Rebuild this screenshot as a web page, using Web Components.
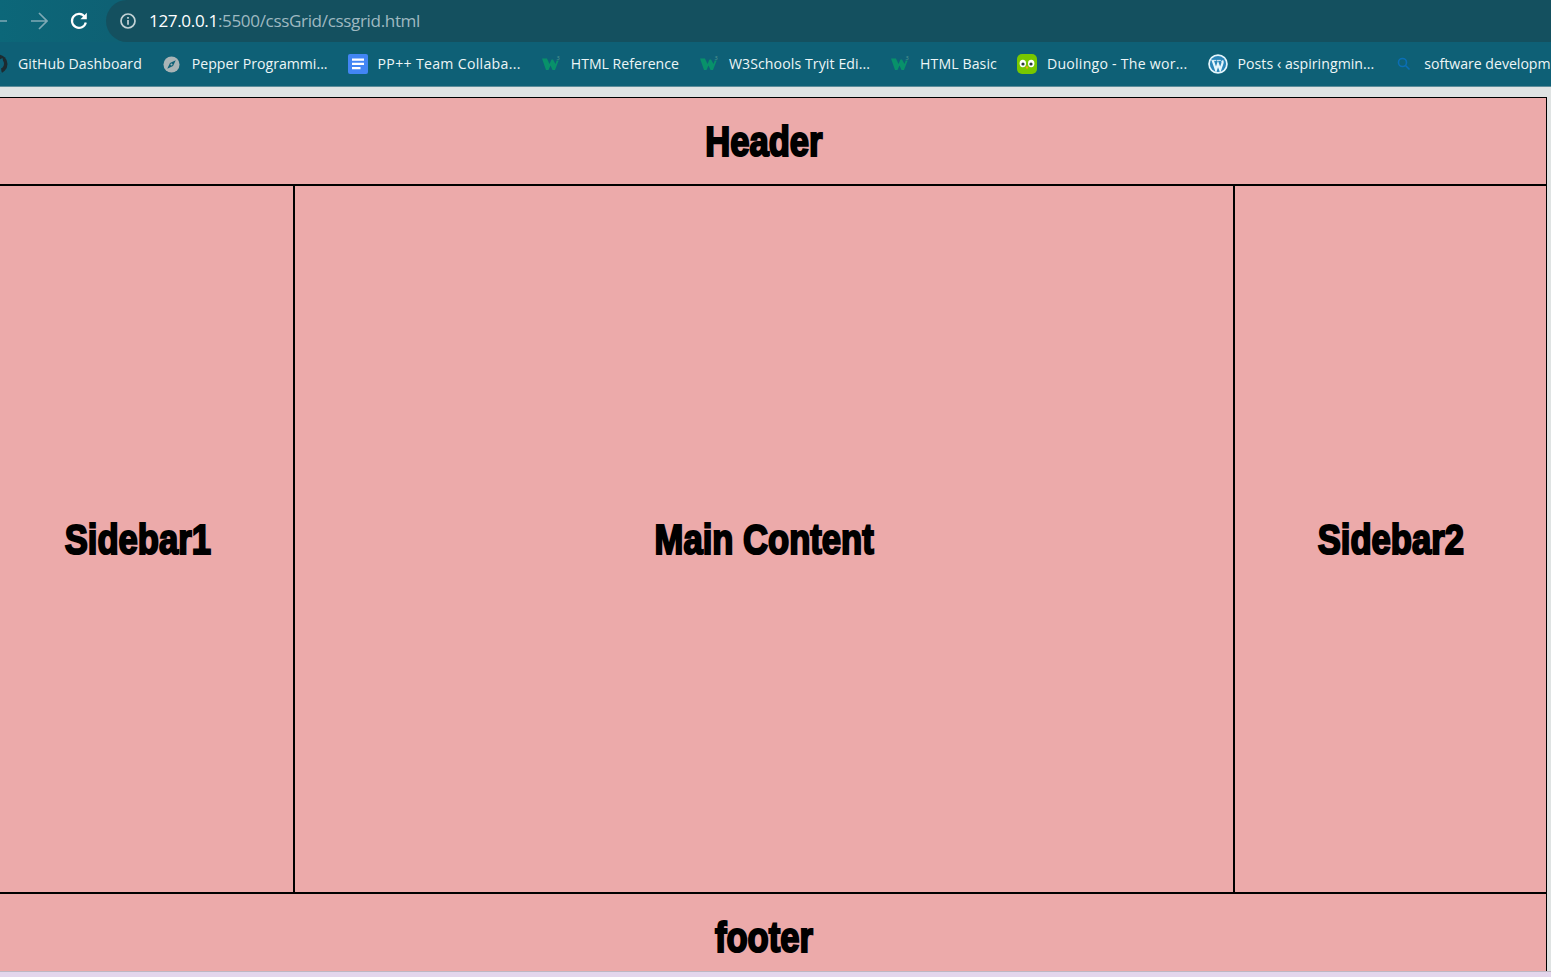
<!DOCTYPE html>
<html><head><meta charset="utf-8"><title>CSS Grid</title>
<style>
html,body{margin:0;padding:0;height:100%;overflow:hidden;background:#dfe3e3}
</style></head><body>
<browser-window>
  <nav-bar slot="top" url-host="127.0.0.1" url-rest=":5500/cssGrid/cssgrid.html"></nav-bar>
  <bookmark-bar slot="top">
    <book-mark kind="github" track=".06">GitHub Dashboard</book-mark>
    <book-mark kind="compass">Pepper Programmi...</book-mark>
    <book-mark kind="docs" track=".32">PP++ Team Collaba...</book-mark>
    <book-mark kind="w3">HTML Reference</book-mark>
    <book-mark kind="w3" track=".1">W3Schools Tryit Edi...</book-mark>
    <book-mark kind="w3" track=".1">HTML Basic</book-mark>
    <book-mark kind="duo" track=".25">Duolingo - The wor...</book-mark>
    <book-mark kind="wp" track=".05">Posts ‹ aspiringmin...</book-mark>
    <book-mark kind="search">software developm</book-mark>
  </bookmark-bar>
  <page-grid>
    <grid-cell area="h">Header</grid-cell>
    <grid-cell area="a">Sidebar1</grid-cell>
    <grid-cell area="m">Main Content</grid-cell>
    <grid-cell area="b">Sidebar2</grid-cell>
    <grid-cell area="f">footer</grid-cell>
  </page-grid>
</browser-window>
<script>
const def=(name,css,html)=>customElements.define(name,class extends HTMLElement{
  connectedCallback(){ if(this.shadowRoot) return; const r=this.attachShadow({mode:'open'});
    r.innerHTML='<style>'+css+'</style>'+(typeof html==='function'?html(this):html); }
});
def('browser-window',`
 :host{display:flex;flex-direction:column;height:977px;overflow:hidden;font-family:"Open Sans","Noto Sans",sans-serif}
 .page{flex:1;min-height:0;overflow:hidden;background:#dfe3e3;padding-top:10px}
 .strip{height:6px;background:#e3d6ec;border-top:1px solid #bdb6c2;box-sizing:border-box;flex:none}
 .top{flex:none;display:block}`,
 `<div class="top"><slot name="top"></slot></div><div class="page"><slot></slot></div><div class="strip"></div>`);
def('nav-bar',`
 :host{display:flex;align-items:center;height:42px;overflow:hidden;background:linear-gradient(90deg,#0c6779,#0e6174 110px)}
 svg{display:block;flex:none}
 .back{margin-left:-10px}
 .fwd{margin-left:22px}
 .reload{margin-left:21px}
 .omni{flex:1;height:42px;margin-left:17px;background:#14505f;border-radius:21px 0 0 21px;display:flex;align-items:center;padding-left:14px;font:17.1px/42px "Open Sans","Noto Sans",sans-serif;color:#9fb9c1;white-space:nowrap;letter-spacing:-.36px}
 .h{color:#fff}
 .info{margin-right:13px}`,
 el=>`<svg class="back" width="18" height="18" viewBox="0 0 18 18" fill="none" stroke="#7fa9b5" stroke-width="1.7"><path d="M1 9H17M9 1 1 9l8 8"/></svg>
 <svg class="fwd" width="18" height="18" viewBox="0 0 18 18" fill="none" stroke="#7fa9b5" stroke-width="1.7"><path d="M1 9H17M9 1l8 8-8 8"/></svg>
 <svg class="reload" width="20" height="20" viewBox="0 0 20 20" fill="none"><path d="M15.800 6A7 7 0 1 0 16.800 11.400" stroke="#fff" stroke-width="2.200"/><path d="M17.800 1.800V8.200h-6.400z" fill="#fff"/></svg>
 <div class="omni"><svg class="info" width="16" height="16" viewBox="0 0 16 16" fill="none" stroke="#c3d2d6" stroke-width="1.700"><circle cx="8" cy="8" r="7"/><path d="M8 7v4.800M8 4v1.800"/></svg><span class="h">${el.getAttribute('url-host')}</span><span>${el.getAttribute('url-rest')}</span></div>`);
def('bookmark-bar',`
 :host{display:flex;align-items:center;height:45px;overflow:hidden;background:#0e6076;border-bottom:1px solid #5c8c99;box-sizing:border-box;white-space:nowrap}
 .in{display:flex;align-items:center;margin-left:-12px}`,
 `<div class="in"><slot></slot></div>`);
const icons={
 github:`<svg width="20" height="20" viewBox="0 0 20 20"><circle cx="10" cy="10" r="9.500" fill="#1d2b30"/><path d="M6 19c1-2 .5-3.500 1-4.500-2-1-3-2.500-3-5 0-1 .4-2 1-2.700L5.500 4l2.200 1.200h4.600L14.500 4l.5 2.800c.6.700 1 1.700 1 2.700 0 2.500-1 4-3 5 .5 1 0 2.500 1 4.500z" fill="#0e6076"/></svg>`,
 compass:`<svg width="17" height="17" viewBox="0 0 18 18"><circle cx="9" cy="9" r="8.500" fill="#a9b4b6"/><path d="M13.500 4.500 7.400 7.400 4.500 13.500l6.100-2.900z" fill="#0e6076"/><circle cx="9" cy="9" r="1.100" fill="#a9b4b6"/></svg>`,
 docs:`<svg width="20" height="20" viewBox="0 0 20 20"><rect width="20" height="20" rx="2" fill="#4285f4"/><path d="M4 4.500h12v2.200H4zM4 8.800h12V11H4zM4 13.100h8.500v2.200H4z" fill="#fff"/></svg>`,
 w3:`<svg width="20" height="20" viewBox="0 0 20 20"><path d="M1 4.500h5l2.500 5.500L10.500 5.500h1.500l2.500 4.500 1.200-3.500h2L14 16h-2.500L9.500 11.500 7.500 16H5z" fill="#08916a"/><text x="15.500" y="5.500" font-size="5.500" fill="#5c9c93" font-family="Open Sans">3</text></svg>`,
 duo:`<svg width="20" height="20" viewBox="0 0 20 20"><rect width="20" height="20" rx="5" fill="#78c800"/><ellipse cx="5.800" cy="9.500" rx="3.200" ry="3.700" fill="#fff"/><ellipse cx="14.200" cy="9.500" rx="3.200" ry="3.700" fill="#fff"/><circle cx="6" cy="10" r="1.600" fill="#2b3a3a"/><circle cx="14" cy="10" r="1.600" fill="#2b3a3a"/><path d="M8.400 12.500h3.200L10 15.500z" fill="#f0a818"/></svg>`,
 wp:`<svg width="20" height="20" viewBox="0 0 20 20" fill="none"><circle cx="10" cy="10" r="9.800" fill="#e6f6fc"/><circle cx="10" cy="10" r="8.100" fill="#2a86b8"/><path d="M4.800 6.600 8 15.800 10 10 12.200 15.800 14.400 9.400c.5-1.300.2-2.200-.2-3" stroke="#e6f6fc" stroke-width="2.200"/><path d="M3.400 6.400h5M9 6.400h3.800" stroke="#e6f6fc" stroke-width=".9"/></svg>`,
 search:`<svg width="16" height="16" viewBox="0 0 16 16" fill="none" stroke="#0b6eb5" stroke-width="1.600"><circle cx="6.500" cy="6.500" r="4"/><path d="M9.500 9.500 13.500 13.500"/></svg>`
};
def('book-mark',`
 :host{display:inline-flex;align-items:center;height:44px;font:14.1px/44px "Open Sans","Noto Sans",sans-serif;color:#edf6f7;margin-right:20px;flex:none}
 svg{display:block;flex:none}
 .ic{display:flex;align-items:center;justify-content:center;width:20px;height:20px;margin-right:10px;flex:none}`,
 el=>{el.style.letterSpacing=(el.getAttribute('track')||0)+'px';return `<span class="ic" style="letter-spacing:0">${icons[el.getAttribute('kind')]}</span><slot></slot>`});
def('page-grid',`
 :host{display:grid;grid-template-columns:1fr 3fr 1fr;grid-template-rows:88px 708px 88px;grid-template-areas:"h h h" "a m b" "f f f";width:1566px;margin-left:-19px;background:#ecaaaa}`,
 `<slot></slot>`);
def('grid-cell',`
 :host{display:flex;align-items:center;justify-content:center;border:1px solid #000;box-sizing:border-box;background:#ecaaaa;color:#000;font:700 43px/1 "Liberation Sans",sans-serif}
 .t{display:inline-block;white-space:nowrap;transform:scaleX(.805);-webkit-text-stroke:2.2px #000}`,
 el=>{el.style.gridArea=el.getAttribute('area');return '<span class="t"><slot></slot></span>'});
</script>
</body></html>
